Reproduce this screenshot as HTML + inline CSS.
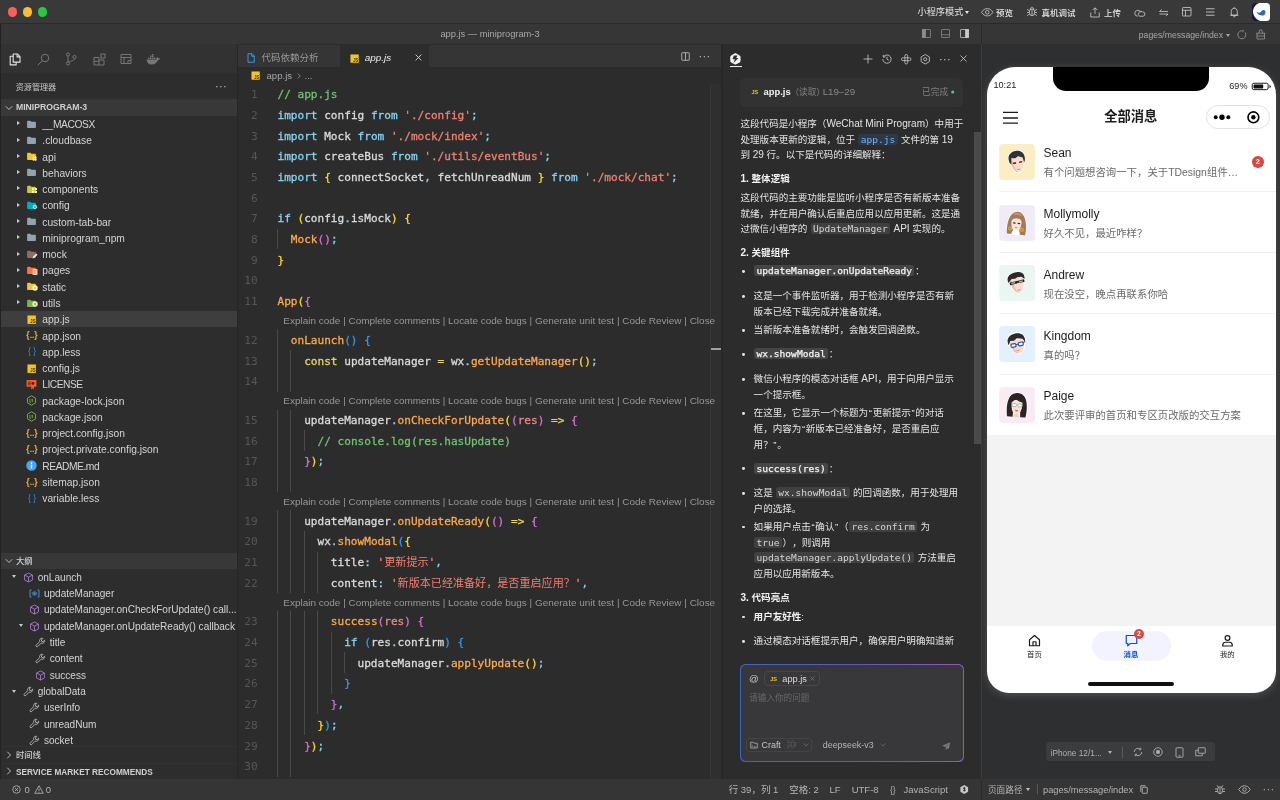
<!DOCTYPE html>
<html lang="zh-CN">
<head>
<meta charset="utf-8">
<title>app.js — miniprogram-3</title>
<style>
*{box-sizing:border-box;margin:0;padding:0}
html,body{width:1280px;height:800px;overflow:hidden;background:#2d2d2d}
#root{position:absolute;left:0;top:0;width:1280px;height:800px;will-change:transform}
body{text-spacing-trim:space-all;font-family:"Liberation Sans","Noto Sans CJK SC",sans-serif;font-size:9.6px;color:#ccc;position:relative;-webkit-font-smoothing:antialiased}
.abs{position:absolute}
svg{display:block;overflow:visible}
/* ---------- top bars ---------- */
#titlebar{left:0;top:0;width:1280px;height:24px;background:#393939;border-bottom:1px solid #2a2a2a}
.tl{position:absolute;top:6.9px;width:9.7px;height:9.7px;border-radius:50%}
#bar2{left:0;top:24px;width:1280px;height:21px;background:#363636}
#bar2r{left:981px;top:24px;width:299px;height:20.5px;background:#363636;border-left:1px solid #2a2a2a}
.tbt{position:absolute;top:0;height:24px;line-height:24px;font-size:9.2px;color:#e4e4e4;white-space:nowrap}
.tbt b{font-weight:500;font-size:8.5px;position:relative;top:.5px}
/* ---------- sidebar ---------- */
#side{left:0;top:44px;width:237.5px;height:736px;background:#2d2d2d}
#act{left:0;top:44px;width:237px;height:29px;background:#323232}
#edge{left:0;top:23px;width:1px;height:777px;background:#222}
.sh{position:absolute;left:1px;width:235.7px;height:16.3px;line-height:17.6px;background:#383838;font-weight:bold;font-size:9.3px;color:#d0d0d0;padding-left:15px;white-space:nowrap}
.row{position:absolute;left:1px;width:235.7px;height:16.3px;line-height:18.5px;font-size:10.25px;color:#d4d4d4;white-space:nowrap}
.row .t{position:absolute;left:41.3px;top:.4px}
.row .ic{position:absolute;left:25.4px;top:3px;width:11px;height:11px}
.row .ar{position:absolute;left:15.8px;top:5.8px;width:0;height:0;border-left:3.6px solid #c8c8c8;border-top:2.6px solid transparent;border-bottom:2.6px solid transparent}
.row.sel{background:#3e3e3e}
.orow{position:absolute;left:1px;width:235.7px;height:16.3px;line-height:17.4px;font-size:10.05px;color:#d4d4d4;white-space:nowrap;overflow:hidden}
.orow .t{position:absolute;top:0}
.orow .ic{position:absolute;top:2.9px;width:11px;height:11px;margin-left:-.5px}
.dn{position:absolute;top:6.6px;width:0;height:0;border-top:3.6px solid #c8c8c8;border-left:2.6px solid transparent;border-right:2.6px solid transparent}
/* ---------- editor ---------- */
#editor{left:237.5px;top:44px;width:483.5px;height:736px;background:#2c2c2c}
#tabs{left:237.5px;top:45px;width:483.5px;height:22px;background:#353535}
.tab{position:absolute;top:0;height:23px;line-height:23.5px;font-size:9.7px;white-space:nowrap}
#code{left:237.5px;top:82.9px;width:478px;font-family:"DejaVu Sans Mono","Noto Sans CJK SC",monospace;font-size:11.09px;color:#dcdcdc}
.ln{position:relative;height:20.7px;line-height:20.7px;white-space:pre}
.ln i{position:absolute;top:2.4px;left:0;width:20.1px;text-align:right;font-style:normal;color:#565656}
.ln s{position:absolute;top:2.4px;left:40px;text-decoration:none;-webkit-text-stroke:.28px}
.cl{position:relative;height:18px;line-height:18.2px;white-space:pre;font-family:"Liberation Sans",sans-serif;font-size:9.98px;color:#979797}
.cl s{position:absolute;top:1.8px;left:45.8px;text-decoration:none}
.ln u{text-decoration:none}
.ln u.z{-webkit-text-stroke:0;color:#f27f6e}
.g{position:absolute;top:1px;width:1px;height:100%;background:#494949}
.k{color:#86d4f3}.c{color:#6fc46f}.st{color:#f2806f}.f{color:#ffa94d}.y{color:#ffd52b}.p{color:#d86fd6}.bl{color:#2f9bee}.pu{color:#86d4f3}.cn{color:#ecd75b}.pr{color:#e58a8a}.op{color:#ecd75b}
/* ---------- AI panel ---------- */
#ai{left:721px;top:44px;width:260px;height:736px;background:#2c2c2c;border-left:2px solid #272727}
#aitext{left:740.5px;top:116px;width:226px;font-size:9.55px;line-height:15.55px;color:#e6e6e6}
#aitext p{margin:0}
#aitext h4{font-size:9.55px;font-weight:bold;color:#f0f0f0;line-height:15.55px}
#aitext code{font-family:"DejaVu Sans Mono",monospace;font-size:9.2px;background:#3c3c3d;border-radius:2px;padding:0.5px 2.5px;color:#d8d8d8}
#aitext code.b{color:#6cb6ff;background:#2f3a4a}
#aitext ul{list-style:none}
#aitext li{position:relative;padding-left:13px}
#aitext li:before{content:"";position:absolute;left:2px;top:6.3px;width:3px;height:3px;border-radius:50%;background:#e6e6e6}
.ab{position:absolute;font-size:9.56px;line-height:15.6px;color:#e4e4e4;white-space:nowrap}
.ab b{font-weight:bold;color:#f2f2f2}
.ab .e{font-size:10.05px}
.ab .q{padding:0 .65px}
.ab code{font-family:"DejaVu Sans Mono",monospace;font-size:9.57px;background:#404041;border-radius:2.5px;padding:0 2.4px;color:#d6d6d6;margin:0 .6px}
.ab code.w{color:#f4f4f4;font-weight:normal;-webkit-text-stroke:.25px;background:#454546}
.ab code.b{color:#6cb6ff;background:#2e3948}
.ab .dot{position:absolute;left:-11.2px;top:6.5px;width:2.8px;height:2.8px;border-radius:50%;background:#e4e4e4}
/* ---------- simulator ---------- */
#sim{left:981px;top:44px;width:299px;height:736px;background:#2e2f30;border-left:1px solid #3a3b3c}
#phone{left:986.5px;top:66.5px;width:289.2px;height:626px;background:#fff;border-radius:28px 28px 22px 22px;overflow:hidden;color:#222;box-shadow:0 2px 9px rgba(255,255,255,.17)}
.msg{position:absolute;left:0;width:290px;height:60.7px}
.msg .av{position:absolute;left:12px;top:12.4px;width:36px;height:36px;border-radius:4px;overflow:hidden}
.msg .nm{position:absolute;left:57px;top:13.7px;font-size:12px;color:#1c1c1c;line-height:16px;white-space:nowrap}
.msg .tx{position:absolute;left:57px;top:34.7px;font-size:10.4px;color:#6a6a6a;line-height:14px;white-space:nowrap}
.msg .ln2{position:absolute;left:12px;right:0;bottom:0;height:1px;background:#f1f1f1}
/* ---------- status bar ---------- */
#status{left:0;top:779px;width:1280px;height:21px;background:#353535;font-size:9.5px;color:#b4b4b4;line-height:22px}
#status span{position:absolute;top:0;white-space:nowrap}
</style>
</head>
<body>
<div id="root">
<!-- ======= TITLE BAR ======= -->
<div id="titlebar" class="abs">
  <div class="tl" style="left:7.5px;background:#fe5f57"></div>
  <div class="tl" style="left:22.5px;background:#febc2e"></div>
  <div class="tl" style="left:37.5px;background:#28c840"></div>

  <!-- titlebar icons -->
  <svg class="abs" style="left:980.500px;top:8px" width="12.500" height="8.500" viewBox="0 0 25 17" fill="none" stroke="#d8d8d8" stroke-width="1.500"><path d="M1.200 8.500c3-5 7-7.300 11.300-7.300s8.300 2.300 11.300 7.300c-3 5-7 7.300-11.300 7.300s-8.300-2.300-11.300-7.300z"/><circle cx="12.500" cy="8.500" r="3.600"/></svg>
  <svg class="abs" style="left:1025.800px;top:6.200px" width="12" height="11" viewBox="0 0 24 22" fill="none" stroke="#d8d8d8" stroke-width="1.500"><ellipse cx="12" cy="12.500" rx="5.300" ry="7"/><path d="M8.500 6.500c.3-2.500 1.800-4 3.500-4s3.200 1.500 3.500 4M12 6v13.500M6.700 9.500l-4.500-2.500M17.300 9.500l4.500-2.500M6.700 13h-4.500M17.300 13h4.500M6.700 16.500l-4.500 2.500M17.300 16.500l4.500 2.500"/></svg>
  <svg class="abs" style="left:1089.500px;top:6.500px" width="10" height="11" viewBox="0 0 20 22" fill="none" stroke="#d8d8d8" stroke-width="1.500"><path d="M10 14v-12M5.500 6l4.500-4.500 4.500 4.500M1.500 11v9h17v-9"/></svg>
  <svg class="abs" style="left:1133.500px;top:7.500px" width="11.500" height="9" viewBox="0 0 23 18" fill="none" stroke="#d8d8d8" stroke-width="1.500"><path d="M7.500 16.500a6 6 0 1 1 5.800-8"/><path d="M11 16.500h6.500a4.300 4.300 0 0 0 0-8.600 5 5 0 0 0-6.500 8.600z" stroke-linejoin="round"/></svg>
  <svg class="abs" style="left:1158.500px;top:8.500px" width="9.500" height="7.500" viewBox="0 0 19 15" fill="none" stroke="#d8d8d8" stroke-width="1.500"><path d="M18 5h-17l4.500-4M1 10h17l-4.500 4"/></svg>
  <svg class="abs" style="left:1181.800px;top:7.300px" width="9.500" height="9.500" viewBox="0 0 19 19" fill="none" stroke="#d8d8d8" stroke-width="1.500"><rect x="1" y="1" width="17" height="17" rx="1.500"/><path d="M1 6.500h17M7 6.500v11.500"/></svg>
  <svg class="abs" style="left:1206px;top:8px" width="8.500" height="8" viewBox="0 0 17 16" fill="none" stroke="#d8d8d8" stroke-width="1.600"><path d="M0 1.500h17M0 8h17M0 14.500h17"/></svg>
  <svg class="abs" style="left:1229.800px;top:6.500px" width="8.500" height="11" viewBox="0 0 17 22" fill="none" stroke="#d8d8d8" stroke-width="1.600"><path d="M2.500 16.500v-7.500c0-4 2.500-6.500 6-6.500s6 2.500 6 6.500v7.500zM.5 16.500h16M6.500 19.500h4"/><path d="M8.500 2.500v-2"/></svg>
  <div class="abs" style="left:1252px;top:3px;width:18px;height:18px;border-radius:3.500px;background:#0f1a4d;overflow:hidden"><svg width="18" height="18" viewBox="0 0 18 18"><path d="M7 0h11v18h-10c-7-2-11-13-1-18z" fill="#fbfcff"/><path d="M4.500 8.500c1.500 1.800 3.500 1.500 4.500.3 1-1.200 2.200-2.300 3.800-1.300 1 .7.700 2.500.2 3.500-1 1.800-3.500 1.800-5.500 1-1.500-.6-2.700-2-3-3.500z" fill="#3a66b8"/></svg></div>
  <div class="tbt" style="left:917.5px">小程序模式</div>
  <div class="abs" style="left:964.5px;top:11px;width:0;height:0;border-top:3.5px solid #e4e4e4;border-left:2.6px solid transparent;border-right:2.6px solid transparent"></div>
  <div class="tbt" style="left:996px"><b>预览</b></div>
  <div class="tbt" style="left:1041.5px"><b>真机调试</b></div>
  <div class="tbt" style="left:1104px"><b>上传</b></div>
</div>
<div id="bar2" class="abs">
  <svg class="abs" style="left:921.500px;top:5.200px" width="9" height="9" viewBox="0 0 18 18" fill="none" stroke="#8c8c8c" stroke-width="1.500"><rect x="1" y="1" width="16" height="16" rx="1"/><rect x="1" y="1" width="6" height="16" fill="#8c8c8c"/></svg>
  <svg class="abs" style="left:940.500px;top:5.200px" width="9" height="9" viewBox="0 0 18 18" fill="none" stroke="#8c8c8c" stroke-width="1.500"><rect x="1" y="1" width="16" height="16" rx="1"/><path d="M1 11.500h16"/></svg>
  <svg class="abs" style="left:960px;top:5.200px" width="9" height="9" viewBox="0 0 18 18" fill="none" stroke="#c8c8c8" stroke-width="1.500"><rect x="1" y="1" width="16" height="16" rx="1"/><rect x="11" y="1" width="6" height="16" fill="#c8c8c8"/></svg>

  <div class="abs" style="left:0;width:980px;top:0;height:20px;line-height:20px;text-align:center;font-size:9.3px;color:#a8a8a8">app.js — miniprogram-3</div>
</div>
<div id="bar2r" class="abs">
  <div class="abs" style="right:57px;top:1px;height:20px;line-height:21px;font-size:8.66px;color:#a8a8a8;white-space:nowrap">pages/message/index</div>
  <div class="abs" style="left:244px;top:10px;width:0;height:0;border-top:3.2px solid #a8a8a8;border-left:2.5px solid transparent;border-right:2.5px solid transparent"></div>
  <svg class="abs" style="left:255px;top:6px" width="9.500" height="9.500" viewBox="0 0 19 19" fill="none" stroke="#9e9e9e" stroke-width="1.500"><path d="M12.500 2.100a8 8 0 1 0 3.600 2.700"/><path d="M12.300 0v3.300" stroke-width="1.300"/></svg>
  <svg class="abs" style="left:273.500px;top:5.200px" width="9.500" height="10.500" viewBox="0 0 19 21" fill="none" stroke="#9e9e9e" stroke-width="1.500"><path d="M.5 8.500h18M2 8.500v11.500h15v-11.500M5.500 8.500l2-6.500h4l2 6.500M2 14h15"/></svg>
</div>

<!-- ======= SIDEBAR ======= -->
<div id="side" class="abs"></div>
<div id="act" class="abs"></div>
<div id="editor" class="abs"></div>
<div id="tabs" class="abs"></div>
<div id="ai" class="abs"></div>
<div id="sim" class="abs"></div>
<div id="edge" class="abs"></div>
<div class="abs" style="left:236.700px;top:45px;width:1px;height:734px;background:#262626"></div>
<!--SB-START-->
<svg width="0" height="0" style="position:absolute">
  <defs>
    <symbol id="fold" viewBox="0 0 20 20"><path d="M2 4.5c0-.8.7-1.5 1.500-1.500h4.200l2 2h6.800c.8 0 1.500.7 1.500 1.500v8.500c0 .8-.7 1.500-1.500 1.500h-13c-.8 0-1.500-.7-1.500-1.500z"/></symbol>
    <symbol id="js" viewBox="0 0 20 20"><rect x="1" y="1" width="18" height="18" fill="#f5c31c"/><text x="7" y="17.500" font-family="Liberation Sans,sans-serif" font-size="10" font-weight="bold" fill="#2e2e2e" textLength="11" lengthAdjust="spacingAndGlyphs">JS</text></symbol>
    <symbol id="cube" viewBox="0 0 20 20"><path d="M10 1.800l7.200 3.800v8.800l-7.200 3.800-7.200-3.800v-8.800zM2.800 5.600l7.200 3.800 7.200-3.800M10 9.400v8.800" fill="none" stroke="#b180d7" stroke-width="1.500" stroke-linejoin="round"/></symbol>
    <symbol id="wrench" viewBox="0 0 20 20"><path d="M12.800 2.200a4.600 4.600 0 0 0-4.300 6.200l-6.100 6.100a1.900 1.900 0 0 0 2.700 2.700l6.100-6.100a4.600 4.600 0 0 0 6.300-5.300l-2.700 2.700-2.600-.6-.6-2.600 2.700-2.700a4.600 4.600 0 0 0-1.500-.4z" fill="none" stroke="#cfcfcf" stroke-width="1.400" stroke-linejoin="round"/></symbol>
    <symbol id="json" viewBox="0 0 24 20"><text x="12" y="15.500" font-family="Liberation Sans,sans-serif" font-size="17" font-weight="bold" fill="#f2b632" text-anchor="middle">{..}</text></symbol>
    <symbol id="less" viewBox="0 0 24 20"><text x="12" y="15.500" font-family="Liberation Sans,sans-serif" font-size="17" fill="#2196e8" text-anchor="middle">{ }</text></symbol>
    <symbol id="node" viewBox="0 0 20 20"><path d="M10 1.500l7.400 4.250v8.500l-7.400 4.250-7.400-4.250v-8.500z" fill="none" stroke="#7cb342" stroke-width="1.700"/><path d="M7 7v6l2 1M12.800 8.200c-2.500-1.200-3.600 1-1.200 1.700 2.400.7 1.300 3-1.400 1.800" fill="none" stroke="#7cb342" stroke-width="1.400"/></symbol>
  </defs>
</svg>
<!-- activity icons -->
<svg class="abs" style="left:8.600px;top:52.600px" width="12" height="12.800" viewBox="0 0 26 28" fill="none" stroke="#e6e6e6" stroke-width="2.300" stroke-linejoin="round"><path d="M9 2h9l6 6v12h-15z"/><path d="M17.500 2v6.500h6.500"/><path d="M9 7h-6.500v19h13v-6"/></svg>
<svg class="abs" style="left:36.500px;top:52.500px" width="13" height="13" viewBox="0 0 26 26" fill="none" stroke="#767676" stroke-width="2"><circle cx="16" cy="10" r="7.500"/><path d="M10.500 15.500l-9 9"/></svg>
<svg class="abs" style="left:65px;top:52px" width="12" height="14" viewBox="0 0 24 28" fill="none" stroke="#767676" stroke-width="2"><circle cx="6" cy="5" r="3.200"/><circle cx="6" cy="23" r="3.200"/><circle cx="19" cy="10" r="3.200"/><path d="M6 8.200v11.600M19 13.200c0 5-7 4-12 7"/></svg>
<svg class="abs" style="left:92.500px;top:52.500px" width="13" height="13" viewBox="0 0 26 26" fill="none" stroke="#767676" stroke-width="2"><path d="M2 9h10v15h-10zM12 14h10v10h-10M2 16.500h10"/><rect x="16" y="2" width="8" height="8"/></svg>
<svg class="abs" style="left:120px;top:53px" width="12" height="12" viewBox="0 0 24 24" fill="none" stroke="#767676" stroke-width="2"><path d="M2 3h20v18h-20zM2 9h20M8 9v12h8v-6h6"/></svg>
<svg class="abs" style="left:146px;top:53.500px" width="14" height="11" viewBox="0 0 28 22"><path d="M1 11h19c1-3 3-5 4-5 1 1 1 2 1 3 1-.5 2-.5 3 0-.5 2-2 3-4 3-2 5-6 9-13 9-6 0-9-4-10-10z" fill="#767676"/><path d="M4 7h3v3h-3zM8 7h3v3h-3zM12 7h3v3h-3zM8 3h3v3h-3zM12 3h3v3h-3zM12 0h3v2.500h-3zM16 7h3v3h-3z" fill="#767676"/></svg>

<div class="abs" style="left:15.700px;top:80.500px;height:14px;line-height:14px;font-size:8.100px;color:#c8c8c8;white-space:nowrap">资源管理器</div>
<div class="abs" style="left:215px;top:79px;height:14px;line-height:14px;font-size:11px;color:#c0c0c0;letter-spacing:.3px">···</div>

<div class="sh" style="top:99.300px;font-size:8.660px">MINIPROGRAM-3</div>
<svg class="abs" style="left:4.500px;top:104.500px" width="8" height="6" viewBox="0 0 16 12" fill="none" stroke="#c8c8c8" stroke-width="1.800"><path d="M1.500 2.500l6.500 6.500 6.500-6.500"/></svg>

<div class="row" style="top:115.600px"><span class="ar"></span><svg class="ic" fill="#90a4ae"><use href="#fold"/></svg><span class="t" style="letter-spacing:-.4px">__MACOSX</span></div>
<div class="row" style="top:131.870px"><span class="ar"></span><svg class="ic" fill="#90a4ae"><use href="#fold"/></svg><span class="t">.cloudbase</span></div>
<div class="row" style="top:148.140px"><span class="ar"></span><svg class="ic" fill="#fbc02d"><use href="#fold"/></svg><svg class="abs" style="left:31.0px;top:7.4px" width="5" height="5" viewBox="0 0 10 10" stroke="#fff8e1" stroke-width="1.600"><path d="M3.500 0v10M7.500 0v10M0 3.500h10M0 7.500h10"/></svg><span class="t">api</span></div>
<div class="row" style="top:164.410px"><span class="ar"></span><svg class="ic" fill="#90a4ae"><use href="#fold"/></svg><span class="t">behaviors</span></div>
<div class="row" style="top:180.680px"><span class="ar"></span><svg class="ic" fill="#c0ca33"><use href="#fold"/></svg><svg class="abs" style="left:31.0px;top:7.4px" width="5" height="5" viewBox="0 0 10 10" fill="#f0f4c3"><rect x="0" y="0" width="4.200" height="4.200"/><rect x="5.800" y="0" width="4.200" height="4.200"/><rect x="0" y="5.800" width="4.200" height="4.200"/><rect x="5.800" y="5.800" width="4.200" height="4.200"/></svg><span class="t">components</span></div>
<div class="row" style="top:196.950px"><span class="ar"></span><svg class="ic" fill="#00acc1"><use href="#fold"/></svg><svg class="abs" style="left:30.5px;top:6.9px" width="6" height="6" viewBox="0 0 12 12"><circle cx="6" cy="6" r="3.300" fill="none" stroke="#b2ebf2" stroke-width="2.600" stroke-dasharray="1.700 1"/><circle cx="6" cy="6" r="3" fill="none" stroke="#b2ebf2" stroke-width="1.600"/></svg><span class="t">config</span></div>
<div class="row" style="top:213.220px"><span class="ar"></span><svg class="ic" fill="#90a4ae"><use href="#fold"/></svg><span class="t">custom-tab-bar</span></div>
<div class="row" style="top:229.490px"><span class="ar"></span><svg class="ic" fill="#90a4ae"><use href="#fold"/></svg><span class="t">miniprogram_npm</span></div>
<div class="row" style="top:245.760px"><span class="ar"></span><svg class="ic" fill="#8d6e63"><use href="#fold"/></svg><svg class="abs" style="left:30.5px;top:6.9px" width="6" height="6" viewBox="0 0 12 12"><path d="M1 11l1.500-4 6-6 2.500 2.500-6 6z" fill="#efebe9"/></svg><span class="t">mock</span></div>
<div class="row" style="top:262.030px"><span class="ar"></span><svg class="ic" fill="#ff7043"><use href="#fold"/></svg><svg class="abs" style="left:30.5px;top:6.9px" width="6" height="6" viewBox="0 0 12 12"><rect x="1" y="0" width="10" height="12" rx="1.500" fill="#ffccbc"/><path d="M3 3.500h6M3 6h6M3 8.500h4" stroke="#ff7043" stroke-width="1.200"/></svg><span class="t">pages</span></div>
<div class="row" style="top:278.300px"><span class="ar"></span><svg class="ic" fill="#fbc02d"><use href="#fold"/></svg><svg class="abs" style="left:30.5px;top:6.9px" width="6" height="6" viewBox="0 0 12 12"><circle cx="6" cy="6" r="5.500" fill="#fff3c4"/><circle cx="6" cy="6" r="2" fill="#fbc02d"/></svg><span class="t">static</span></div>
<div class="row" style="top:294.570px"><span class="ar"></span><svg class="ic" fill="#7cb342"><use href="#fold"/></svg><svg class="abs" style="left:30.5px;top:6.9px" width="6" height="6" viewBox="0 0 12 12"><circle cx="6" cy="6" r="5.500" fill="#dcedc8"/><circle cx="6" cy="6" r="2" fill="#7cb342"/></svg><span class="t">utils</span></div>
<div class="row sel" style="top:310.840px"><svg class="ic" style="left:26.2px;top:4.4px;width:9.4px;height:9.4px"><use href="#js"/></svg><span class="t">app.js</span></div>
<div class="row" style="top:327.110px"><svg class="ic" style="left:25px;width:12px"><use href="#json"/></svg><span class="t">app.json</span></div>
<div class="row" style="top:343.380px"><svg class="ic" style="left:25px;width:12px"><use href="#less"/></svg><span class="t">app.less</span></div>
<div class="row" style="top:359.650px"><svg class="ic" style="left:26.2px;top:4.4px;width:9.4px;height:9.4px"><use href="#js"/></svg><span class="t">config.js</span></div>
<div class="row" style="top:375.920px"><svg class="ic" viewBox="0 0 20 20"><path d="M1 2h18v12h-4.500v5l-2.500-2-2.500 2v-5h-8.500z" fill="#ff5722"/><path d="M3.500 5.500h5M3.500 8h5M3.500 10.500h5" stroke="#2e2e2e" stroke-width="1.300"/><circle cx="12.500" cy="8" r="2.600" fill="#2e2e2e"/></svg><span class="t" style="letter-spacing:-.5px">LICENSE</span></div>
<div class="row" style="top:392.190px"><svg class="ic"><use href="#node"/></svg><span class="t">package-lock.json</span></div>
<div class="row" style="top:408.460px"><svg class="ic"><use href="#node"/></svg><span class="t">package.json</span></div>
<div class="row" style="top:424.730px"><svg class="ic" style="left:25px;width:12px"><use href="#json"/></svg><span class="t">project.config.json</span></div>
<div class="row" style="top:441.000px"><svg class="ic" style="left:25px;width:12px"><use href="#json"/></svg><span class="t">project.private.config.json</span></div>
<div class="row" style="top:457.270px"><svg class="ic" viewBox="0 0 20 20"><circle cx="10" cy="10" r="9.500" fill="#42a5f5"/><circle cx="10" cy="5.600" r="1.500" fill="#fff"/><rect x="8.700" y="8.400" width="2.600" height="7" fill="#fff"/></svg><span class="t" style="letter-spacing:-.45px">README.md</span></div>
<div class="row" style="top:473.540px"><svg class="ic" style="left:25px;width:12px"><use href="#json"/></svg><span class="t">sitemap.json</span></div>
<div class="row" style="top:489.810px"><svg class="ic" style="left:25px;width:12px"><use href="#less"/></svg><span class="t">variable.less</span></div>

<!-- outline -->
<div class="sh" style="top:552.500px;font-size:8.300px;font-weight:500">大纲</div>
<svg class="abs" style="left:4.500px;top:557.700px" width="8" height="6" viewBox="0 0 16 12" fill="none" stroke="#c8c8c8" stroke-width="1.800"><path d="M1.500 2.500l6.500 6.500 6.500-6.500"/></svg>
<div class="orow" style="top:568.850px"><span class="dn" style="left:11px"></span><svg class="ic" style="left:22.600px"><use href="#cube"/></svg><span class="t" style="left:36.700px">onLaunch</span></div>
<div class="orow" style="top:585.150px"><svg class="ic" style="left:28px;width:11px" viewBox="0 0 22 20" fill="none" stroke="#4fa3e6" stroke-width="1.600"><path d="M5 3h-3v14h3M17 3h3v14h-3"/><ellipse cx="11" cy="10" rx="4.500" ry="3.200"/><circle cx="11" cy="10" r="1.200" fill="#4fa3e6"/></svg><span class="t" style="left:42.900px">updateManager</span></div>
<div class="orow" style="top:601.450px"><svg class="ic" style="left:28.400px"><use href="#cube"/></svg><span class="t" style="left:42.900px">updateManager.onCheckForUpdate() call...</span></div>
<div class="orow" style="top:617.750px"><span class="dn" style="left:17.500px"></span><svg class="ic" style="left:28.400px"><use href="#cube"/></svg><span class="t" style="left:42.900px">updateManager.onUpdateReady() callback</span></div>
<div class="orow" style="top:634.050px"><svg class="ic" style="left:34.300px"><use href="#wrench"/></svg><span class="t" style="left:48.700px">title</span></div>
<div class="orow" style="top:650.350px"><svg class="ic" style="left:34.300px"><use href="#wrench"/></svg><span class="t" style="left:48.700px">content</span></div>
<div class="orow" style="top:666.650px"><svg class="ic" style="left:34.300px"><use href="#cube"/></svg><span class="t" style="left:48.700px">success</span></div>
<div class="orow" style="top:682.950px"><span class="dn" style="left:11px"></span><svg class="ic" style="left:22.600px"><use href="#wrench"/></svg><span class="t" style="left:36.700px">globalData</span></div>
<div class="orow" style="top:699.250px"><svg class="ic" style="left:28.400px"><use href="#wrench"/></svg><span class="t" style="left:42.900px">userInfo</span></div>
<div class="orow" style="top:715.550px"><svg class="ic" style="left:28.400px"><use href="#wrench"/></svg><span class="t" style="left:42.900px">unreadNum</span></div>
<div class="orow" style="top:731.850px"><svg class="ic" style="left:28.400px"><use href="#wrench"/></svg><span class="t" style="left:42.900px">socket</span></div>

<div class="sh" style="top:746.400px;background:#2d2d2d;border-top:1px solid #313131;font-size:8.300px;font-weight:500">时间线</div>
<svg class="abs" style="left:5.500px;top:750.500px" width="6" height="8" viewBox="0 0 12 16" fill="none" stroke="#c8c8c8" stroke-width="1.800"><path d="M2.500 1.500l6.500 6.500-6.500 6.500"/></svg>
<div class="sh" style="top:762.700px;background:#2d2d2d;border-top:1px solid #313131;font-size:8.270px">SERVICE MARKET RECOMMENDS</div>
<svg class="abs" style="left:5.500px;top:767px" width="6" height="8" viewBox="0 0 12 16" fill="none" stroke="#c8c8c8" stroke-width="1.800"><path d="M2.500 1.500l6.500 6.500-6.500 6.500"/></svg>
<!--SB-END-->
<!--ED-START-->
<!-- tabs -->
<svg class="abs" style="left:246.500px;top:53.200px" width="8" height="10" viewBox="0 0 16 20" fill="none" stroke="#3a96e8" stroke-width="2"><path d="M2 1.500h8l4.500 4.500v12.500h-12.500zM9.500 1.500v5h5"/></svg>
<div class="tab abs" style="left:261.600px;top:46.400px;font-size:9.500px;color:#9a9a9a">代码依赖分析</div>
<div class="abs" style="left:339.800px;top:45px;width:89.700px;height:22px;background:#2c2c2c"></div>
<svg class="abs" style="left:349.600px;top:53.800px" width="9.200" height="9.200"><use href="#js"/></svg>
<div class="tab abs" style="left:364.800px;top:46.400px;font-style:italic;font-size:9.900px;color:#f0f0f0">app.js</div>
<svg class="abs" style="left:415px;top:53.500px" width="7" height="7" viewBox="0 0 12 12" stroke="#e0e0e0" stroke-width="1.500"><path d="M1 1l10 10M11 1l-10 10"/></svg>
<svg class="abs" style="left:680.500px;top:51.500px" width="9" height="9" viewBox="0 0 18 18" fill="none" stroke="#c0c0c0" stroke-width="1.700"><rect x="1.500" y="1.500" width="15" height="15" rx="1"/><path d="M9 1.500v15"/></svg>
<div class="abs" style="left:698.500px;top:49px;height:14px;line-height:14px;font-size:11px;color:#c0c0c0;letter-spacing:.3px">···</div>
<!-- breadcrumb -->
<svg class="abs" style="left:250.800px;top:70.800px" width="9.200" height="9.200"><use href="#js"/></svg>
<div class="abs" style="left:266.500px;top:68px;height:15px;line-height:15px;font-size:9.600px;color:#a6a6a6;white-space:nowrap">app.js</div>
<svg class="abs" style="left:296.500px;top:72.500px" width="4" height="6" viewBox="0 0 8 12" fill="none" stroke="#a0a0a0" stroke-width="1.500"><path d="M1.500 1l5 5-5 5"/></svg>
<div class="abs" style="left:304.500px;top:68px;height:15px;line-height:15px;font-size:9.600px;color:#a6a6a6">...</div>
<!-- minimap/scroll strip -->
<div class="abs" style="left:710.200px;top:84px;width:10.800px;height:695px;background:#2f2f2f;border-left:1px solid #363636"></div>
<div class="abs" style="left:710.600px;top:348px;width:10.500px;height:1.500px;background:#a0a0a0"></div>
<div id="code" class="abs">
<div class="ln"><i>1</i><s><u class="c">// app.js</u></s></div>
<div class="ln"><i>2</i><s><u class="k">import</u> config <u class="k">from</u> <u class="st">'./config'</u><u class="pu">;</u></s></div>
<div class="ln"><i>3</i><s><u class="k">import</u> Mock <u class="k">from</u> <u class="st">'./mock/index'</u><u class="pu">;</u></s></div>
<div class="ln"><i>4</i><s><u class="k">import</u> createBus <u class="k">from</u> <u class="st">'./utils/eventBus'</u><u class="pu">;</u></s></div>
<div class="ln"><i>5</i><s><u class="k">import</u> <u class="y">{</u> connectSocket<u class="pu">,</u> fetchUnreadNum <u class="y">}</u> <u class="k">from</u> <u class="st">'./mock/chat'</u><u class="pu">;</u></s></div>
<div class="ln"><i>6</i><s></s></div>
<div class="ln"><i>7</i><s><u class="k">if</u> <u class="y">(</u>config<u class="pu">.</u>isMock<u class="y">)</u> <u class="y">{</u></s></div>
<div class="ln"><b class="g" style="left:39.5px"></b><i>8</i><s>  <u class="f">Mock</u><u class="p">()</u><u class="pu">;</u></s></div>
<div class="ln"><i>9</i><s><u class="y">}</u></s></div>
<div class="ln"><i>10</i><s></s></div>
<div class="ln"><i>11</i><s><u class="f">App</u><u class="y">(</u><u class="p">{</u></s></div>
<div class="cl"><s>Explain code | Complete comments | Locate code bugs | Generate unit test | Code Review | Close</s></div>
<div class="ln"><b class="g" style="left:39.5px"></b><i>12</i><s>  <u class="f">onLaunch</u><u class="bl">()</u> <u class="bl">{</u></s></div>
<div class="ln"><b class="g" style="left:39.5px"></b><b class="g" style="left:52.9px"></b><i>13</i><s>    <u class="cn">const</u> updateManager <u class="op">=</u> wx<u class="pu">.</u><u class="f">getUpdateManager</u><u class="y">()</u><u class="pu">;</u></s></div>
<div class="ln"><b class="g" style="left:39.5px"></b><b class="g" style="left:52.9px"></b><i>14</i><s></s></div>
<div class="cl"><s>Explain code | Complete comments | Locate code bugs | Generate unit test | Code Review | Close</s></div>
<div class="ln"><b class="g" style="left:39.5px"></b><b class="g" style="left:52.9px"></b><i>15</i><s>    updateManager<u class="pu">.</u><u class="f">onCheckForUpdate</u><u class="y">(</u><u class="p">(</u><u class="pr">res</u><u class="p">)</u> <u class="op">=&gt;</u> <u class="p">{</u></s></div>
<div class="ln"><b class="g" style="left:39.5px"></b><b class="g" style="left:52.9px"></b><b class="g" style="left:66.3px"></b><i>16</i><s>      <u class="c">// console.log(res.hasUpdate)</u></s></div>
<div class="ln"><b class="g" style="left:39.5px"></b><b class="g" style="left:52.9px"></b><i>17</i><s>    <u class="p">}</u><u class="y">)</u><u class="pu">;</u></s></div>
<div class="ln"><b class="g" style="left:39.5px"></b><b class="g" style="left:52.9px"></b><i>18</i><s></s></div>
<div class="cl"><s>Explain code | Complete comments | Locate code bugs | Generate unit test | Code Review | Close</s></div>
<div class="ln"><b class="g" style="left:39.5px"></b><b class="g" style="left:52.9px"></b><i>19</i><s>    updateManager<u class="pu">.</u><u class="f">onUpdateReady</u><u class="y">(</u><u class="p">()</u> <u class="op">=&gt;</u> <u class="p">{</u></s></div>
<div class="ln"><b class="g" style="left:39.5px"></b><b class="g" style="left:52.9px"></b><b class="g" style="left:66.3px"></b><i>20</i><s>      wx<u class="pu">.</u><u class="f">showModal</u><u class="bl">(</u><u class="y">{</u></s></div>
<div class="ln"><b class="g" style="left:39.5px"></b><b class="g" style="left:52.9px"></b><b class="g" style="left:66.3px"></b><b class="g" style="left:79.7px"></b><i>21</i><s>        title<u class="pu">:</u> <u class="st">'<u class="z">更新提示</u>'</u><u class="pu">,</u></s></div>
<div class="ln"><b class="g" style="left:39.5px"></b><b class="g" style="left:52.9px"></b><b class="g" style="left:66.3px"></b><b class="g" style="left:79.7px"></b><i>22</i><s>        content<u class="pu">:</u> <u class="st">'<u class="z">新版本已经准备好，是否重启应用？</u>'</u><u class="pu">,</u></s></div>
<div class="cl"><s>Explain code | Complete comments | Locate code bugs | Generate unit test | Code Review | Close</s></div>
<div class="ln"><b class="g" style="left:39.5px"></b><b class="g" style="left:52.9px"></b><b class="g" style="left:66.3px"></b><b class="g" style="left:79.7px"></b><i>23</i><s>        <u class="f">success</u><u class="p">(</u><u class="pr">res</u><u class="p">)</u> <u class="p">{</u></s></div>
<div class="ln"><b class="g" style="left:39.5px"></b><b class="g" style="left:52.9px"></b><b class="g" style="left:66.3px"></b><b class="g" style="left:79.7px"></b><b class="g" style="left:93.1px"></b><i>24</i><s>          <u class="k">if</u> <u class="bl">(</u>res<u class="pu">.</u>confirm<u class="bl">)</u> <u class="bl">{</u></s></div>
<div class="ln"><b class="g" style="left:39.5px"></b><b class="g" style="left:52.9px"></b><b class="g" style="left:66.3px"></b><b class="g" style="left:79.7px"></b><b class="g" style="left:93.1px"></b><b class="g" style="left:106.5px"></b><i>25</i><s>            updateManager<u class="pu">.</u><u class="f">applyUpdate</u><u class="y">()</u><u class="pu">;</u></s></div>
<div class="ln"><b class="g" style="left:39.5px"></b><b class="g" style="left:52.9px"></b><b class="g" style="left:66.3px"></b><b class="g" style="left:79.7px"></b><b class="g" style="left:93.1px"></b><i>26</i><s>          <u class="bl">}</u></s></div>
<div class="ln"><b class="g" style="left:39.5px"></b><b class="g" style="left:52.9px"></b><b class="g" style="left:66.3px"></b><b class="g" style="left:79.7px"></b><i>27</i><s>        <u class="p">}</u><u class="pu">,</u></s></div>
<div class="ln"><b class="g" style="left:39.5px"></b><b class="g" style="left:52.9px"></b><b class="g" style="left:66.3px"></b><i>28</i><s>      <u class="y">}</u><u class="bl">)</u><u class="pu">;</u></s></div>
<div class="ln"><b class="g" style="left:39.5px"></b><b class="g" style="left:52.9px"></b><i>29</i><s>    <u class="p">}</u><u class="y">)</u><u class="pu">;</u></s></div>
<div class="ln"><b class="g" style="left:39.5px"></b><b class="g" style="left:52.9px"></b><i>30</i><s></s></div>
</div>
<!--ED-END-->
<!--AI-START-->
<!-- AI header -->
<svg class="abs" style="left:730.300px;top:52.600px" width="10.800" height="11.800" viewBox="0 0 22 24"><path d="M11 .5c.7 0 1.300.2 1.900.5l6.700 3.900c1.200.7 1.900 1.900 1.900 3.300v7.600c0 1.400-.7 2.600-1.900 3.300l-6.700 3.900c-1.200.7-2.600.7-3.800 0l-6.700-3.900c-1.200-.7-1.900-1.900-1.900-3.300v-7.600c0-1.400.7-2.600 1.900-3.300l6.700-3.900c.6-.3 1.200-.5 1.900-.5z" fill="#f2f2f2"/><path d="M7.800 5h7.700l-3 5h4.700l-10 10.200 2.700-7.400h-4.700z" fill="#2c2c2c"/></svg>
<div class="abs" style="left:729.700px;top:65.800px;width:12px;height:1.300px;background:#f0f0f0"></div>
<svg class="abs" style="left:863px;top:53.700px" width="10" height="10" viewBox="0 0 20 20" stroke="#d0d0d0" stroke-width="1.600" fill="none"><path d="M10 1v18M1 10h18"/></svg>
<svg class="abs" style="left:882px;top:53.700px" width="10" height="10" viewBox="0 0 20 20" stroke="#d0d0d0" stroke-width="1.600" fill="none"><path d="M3.200 5.500a8.300 8.300 0 1 1-1.500 4.500"/><path d="M2.500 1.500v4.500h4.500M10 5.500v5l3.500 2"/></svg>
<svg class="abs" style="left:901px;top:53.500px" width="10.500" height="10.500" viewBox="0 0 21 21" stroke="#d0d0d0" stroke-width="1.500" fill="none"><rect x="7.700" y="1" width="5.600" height="19" rx="2.800"/><rect x="1" y="7.700" width="19" height="5.600" rx="2.800"/></svg>
<svg class="abs" style="left:920px;top:53.500px" width="10.500" height="10.500" viewBox="0 0 21 21" stroke="#d0d0d0" stroke-width="1.600" fill="none"><path d="M10.500 1l8.200 4.750v9.500l-8.200 4.750-8.200-4.750v-9.500z"/><circle cx="10.500" cy="10.500" r="3.200"/></svg>
<div class="abs" style="left:939px;top:51.500px;height:14px;line-height:14px;font-size:11px;color:#d0d0d0;letter-spacing:.3px">···</div>
<svg class="abs" style="left:960.300px;top:55.200px" width="7" height="7" viewBox="0 0 14 14" stroke="#d0d0d0" stroke-width="1.600"><path d="M1 1l12 12M13 1l-12 12"/></svg>
<!-- file card -->
<div class="abs" style="left:740px;top:77.500px;width:223px;height:29px;background:#323233;border-radius:5px"></div>
<div class="abs" style="left:751.500px;top:86px;height:12px;line-height:12px;font-size:5.600px;font-weight:bold;color:#e8c51f;letter-spacing:-.1px">JS</div>
<div class="abs" style="left:763.600px;top:84px;height:16px;line-height:16px;font-size:9.400px;font-weight:bold;color:#f2f2f2;white-space:nowrap">app.js</div>
<div class="abs" style="left:790.500px;top:84px;height:16px;line-height:16px;font-size:8.600px;color:#808080;white-space:nowrap">（读取）<span style="font-size:9.700px;margin-left:-2.200px;color:#888">L19–29</span></div>
<div class="abs" style="left:922px;top:84px;height:16px;line-height:16px;font-size:8.700px;color:#808080;white-space:nowrap">已完成</div>
<svg class="abs" style="left:950px;top:89px" width="6" height="6" viewBox="0 0 6 6"><circle cx="2.700" cy="3" r="1.500" fill="#3ad2ac"/></svg>
<!-- text -->
<div class="ab " style="top:116.05px;left:740.5px;width:226px">这段代码是小程序（<span class="e">WeChat Mini Program</span>）中用于<br>处理版本更新的逻辑，位于 <code class="b">app.js</code> 文件的第 <span class="e">19</span><br>到 <span class="e">29</span> 行。以下是代码的详细解释：</div>
<div class="ab " style="top:171.20px;left:740.5px;width:226px"><b><span class="e">1.</span> 整体逻辑</b></div>
<div class="ab " style="top:189.95px;left:740.5px;width:226px">这段代码的主要功能是监听小程序是否有新版本准备<br>就绪，并在用户确认后重启应用以应用更新。这是通<br>过微信小程序的 <code>UpdateManager</code> <span class="e">API</span> 实现的。</div>
<div class="ab " style="top:245.45px;left:740.5px;width:226px"><b><span class="e">2.</span> 关键组件</b></div>
<div class="ab" style="top:263.45px;left:753.6px;width:212px"><span class="dot"></span><code class="w">updateManager.onUpdateReady</code>：</div>
<div class="ab" style="top:288.45px;left:753.6px;width:212px"><span class="dot"></span>这是一个事件监听器，用于检测小程序是否有新<br>版本已经下载完成并准备就绪。</div>
<div class="ab" style="top:322.45px;left:753.6px;width:212px"><span class="dot"></span>当新版本准备就绪时，会触发回调函数。</div>
<div class="ab" style="top:346.45px;left:753.6px;width:212px"><span class="dot"></span><code class="w">wx.showModal</code>：</div>
<div class="ab" style="top:371.45px;left:753.6px;width:212px"><span class="dot"></span>微信小程序的模态对话框 <span class="e">API</span>，用于向用户显示<br>一个提示框。</div>
<div class="ab" style="top:405.45px;left:753.6px;width:212px"><span class="dot"></span>在这里，它显示一个标题为<span class="q">“</span>更新提示<span class="q">”</span>的对话<br>框，内容为<span class="q">“</span>新版本已经准备好，是否重启应<br>用？<span class="q">”</span>。</div>
<div class="ab" style="top:460.95px;left:753.6px;width:212px"><span class="dot"></span><code class="w">success(res)</code>：</div>
<div class="ab" style="top:485.45px;left:753.6px;width:212px"><span class="dot"></span>这是 <code>wx.showModal</code> 的回调函数，用于处理用<br>户的选择。</div>
<div class="ab" style="top:519.20px;left:753.6px;width:212px"><span class="dot"></span>如果用户点击<span class="q">“</span>确认<span class="q">”</span>（<code>res.confirm</code> 为<br><code>true</code>），则调用<br><code>updateManager.applyUpdate()</code> 方法重启<br>应用以应用新版本。</div>
<div class="ab " style="top:590.45px;left:740.5px;width:226px"><b><span class="e">3.</span> 代码亮点</b></div>
<div class="ab" style="top:609.20px;left:753.6px;width:212px"><span class="dot"></span><b>用户友好性</b>:</div>
<div class="ab" style="top:633.45px;left:753.6px;width:212px"><span class="dot"></span>通过模态对话框提示用户，确保用户明确知道新</div>
<!-- scrollbar -->
<div class="abs" style="left:974px;top:132px;width:6.500px;height:312px;background:#4b4b4b"></div>
<!-- input box -->
<div class="abs" style="left:739.500px;top:664.200px;width:224.300px;height:97.600px;border-radius:5.500px;background:linear-gradient(90deg,#3a66c6,#5f57c2 50%,#8f58c6)"></div>
<div class="abs" style="left:740.500px;top:665.200px;width:222.300px;height:95.600px;border-radius:4.700px;background:#38383a"></div>
<div class="abs" style="left:749px;top:671.500px;height:14px;line-height:14px;font-size:9.500px;color:#c8c8c8">@</div>
<div class="abs" style="left:764.200px;top:670.700px;width:56.300px;height:15.600px;border:1px solid #474748;border-radius:4px"></div>
<div class="abs" style="left:770.300px;top:672.600px;height:12px;line-height:12px;font-size:5.600px;font-weight:bold;color:#e8c51f;letter-spacing:-.1px">JS</div>
<div class="abs" style="left:782.300px;top:671.500px;height:14px;line-height:14px;font-size:9.200px;color:#dedede;white-space:nowrap">app.js</div>
<svg class="abs" style="left:810.200px;top:676.200px" width="5" height="5" viewBox="0 0 10 10" stroke="#777" stroke-width="1.400"><path d="M1 1l8 8M9 1l-8 8"/></svg>
<div class="abs" style="left:749.200px;top:691.200px;height:14px;line-height:14px;font-size:8.600px;color:#686868;white-space:nowrap">请输入你的问题</div>
<div class="abs" style="left:746.200px;top:738.200px;width:66.300px;height:13.800px;border:1px solid #434344;border-radius:3px"></div>
<svg class="abs" style="left:750px;top:741px" width="8" height="8" viewBox="0 0 16 16" stroke="#b8b8b8" stroke-width="1.500" fill="none"><path d="M1.500 2.500h5l1.500 2h6.500v9.500h-13z"/><path d="M5 8.500l-1.500 1.500 1.500 1.500M8 11.500h3"/></svg>
<div class="abs" style="left:761.600px;top:738px;height:14px;line-height:14px;font-size:8.900px;color:#c4c4c4;white-space:nowrap">Craft</div>
<div class="abs" style="left:786.500px;top:738px;height:14px;line-height:14px;font-size:7.600px;color:#6c6c6c;white-space:nowrap">⌘I</div>
<svg class="abs" style="left:802.500px;top:743.200px" width="6" height="4" viewBox="0 0 12 8" stroke="#6c6c6c" stroke-width="1.500" fill="none"><path d="M1 1l5 5 5-5"/></svg>
<div class="abs" style="left:822.800px;top:738px;height:14px;line-height:14px;font-size:8.900px;color:#b4b4b4;white-space:nowrap">deepseek-v3</div>
<svg class="abs" style="left:880.300px;top:742.800px" width="6" height="4" viewBox="0 0 12 8" stroke="#6c6c6c" stroke-width="1.500" fill="none"><path d="M1 1l5 5 5-5"/></svg>
<svg class="abs" style="left:941.500px;top:741.500px" width="8.500" height="8.500" viewBox="0 0 17 17" fill="#7e7e7e"><path d="M16.500 .5l-16 7 6 2.500zM16.500 .5l-9 10.500v5.500l2.800-3.800 3.200 1.300z"/></svg>
<!--AI-END-->
<!--SIM-START-->
<div id="phone" class="abs">
  <div class="abs" style="left:66.500px;top:-10px;width:156px;height:34.300px;background:#000;border-radius:0 0 13px 13px"></div>
  <div class="abs" style="left:7px;top:11.500px;height:14px;line-height:14px;font-size:9.100px;color:#1a1a1a">10:21</div>
  <div class="abs" style="left:242.800px;top:12.300px;height:14px;line-height:14px;font-size:9.100px;color:#1a1a1a">69%</div>
  <svg class="abs" style="left:264px;top:15px" width="21" height="9" viewBox="0 0 21 9"><rect x="1.250" y="1.250" width="15.900" height="6.400" rx="1.600" fill="none" stroke="#1a1a1a" stroke-width="1"/><rect x="2.600" y="2.600" width="9.600" height="3.800" rx=".6" fill="#111"/><path d="M18.500 3v3c.9-.2 1.300-.8 1.300-1.500s-.4-1.300-1.300-1.500z" fill="#1a1a1a"/></svg>
  <!-- nav -->
  <svg class="abs" style="left:16.500px;top:44px" width="15" height="13" viewBox="0 0 15 13" stroke="#1a1a1a" stroke-width="1.350"><path d="M0 1.350h15M0 6.950h15M0 12.050h15"/></svg>
  <div class="abs" style="left:0;width:290px;top:40.500px;height:20px;line-height:20px;text-align:center;font-size:13.3px;font-weight:bold;color:#1a1a1a;text-indent:-1.500px">全部消息</div>
  <div class="abs" style="left:219.700px;top:38.700px;width:64.100px;height:23.500px;border:1px solid #e2e2e2;border-radius:11.800px"></div>
  <svg class="abs" style="left:219.700px;top:38.700px" width="64.100" height="23.500" viewBox="0 0 64.100 23.500"><circle cx="9.700" cy="12.300" r="1.950"/><circle cx="16" cy="12.300" r="2.700"/><circle cx="22.300" cy="12.300" r="1.950"/><circle cx="47.400" cy="12.300" r="5.400" fill="none" stroke="#000" stroke-width="1.600"/><circle cx="47.400" cy="12.300" r="2.200"/></svg>
  <div class="msg" style="top:65.10px"><div class="av"><svg width="36.3" height="36" viewBox="0 0 36 36"><rect width="36" height="36" fill="#fbeec4"/><g transform="rotate(-10 18 18)"><path d="M9.600 16.500c-1.600-7.500 3-10.500 8.600-10.500 5.400 0 9.800 3 8.200 10.500-.3 1.800-1 3-1.600 3.600-.6 4.200-3.200 9.400-6.800 9.400s-6.200-5.200-6.800-9.400c-.7-.6-1.300-1.800-1.600-3.600z" fill="#fff"/><path d="M11.500 15c2-2.300 11-2.600 13.500 0 .3 5.500-2.400 13.500-6.800 13.500s-7-8-6.700-13.500z" fill="#f9dccc"/><path d="M11.500 15c-.2 5 2 12.500 5.600 13.400-2-2.500-3.400-8-3.200-12z" fill="#f2bda2"/><path d="M10.300 17.500c-1.600-7.200 2.600-10.600 8-10.600 5.200 0 9.300 3.400 7.700 10.600l-1.200 2.300-.6-5.400-4.400-1.800-3 1.400-3.800-.8-1.200 6.400z" fill="#333"/><path d="M13.600 18.500l3.200.3M19.800 18.800l3.200-.3" stroke="#2a2a2a" stroke-width="1.300"/><path d="M16.600 25.200c1 .5 2.200.5 3.200 0" stroke="#d98b7c" stroke-width="1" fill="none"/></g></svg></div><div class="nm">Sean</div><div class="tx">有个问题想咨询一下，关于TDesign组件…</div><div class="abs" style="left:265.500px;top:24.900px;width:11.500px;height:11.500px;border-radius:50%;background:#d54941;color:#fff;font-size:7.400px;font-weight:bold;line-height:11.700px;text-align:center">2</div><div class="ln2"></div></div>
<div class="msg" style="top:125.85px"><div class="av"><svg width="36.3" height="36" viewBox="0 0 36 36"><rect width="36" height="36" fill="#f1eaf7"/><g transform="rotate(6 18 18)"><path d="M8 30c-1.200-9 .2-24 9.600-24s11.300 14.500 10.300 24z" fill="#fff" opacity=".7"/><path d="M8.800 29.500c-1.200-9 .3-22.700 8.800-22.700s10.600 13.700 9.600 22.700h-5.600l-1-6h-5.200l-1 6z" fill="#a47a58"/><path d="M12 10c3-3 8-3.500 11 1-3.500-1.500-7.500-1.500-11-1z" fill="#c09a78"/><path d="M12.300 16c1.500-3.600 8.500-3.600 10 0 .3 4-.6 7.600-2.200 9.200-1.400 1.400-4.200 1.400-5.600 0-1.600-1.600-2.500-5.200-2.200-9.200z" fill="#fae2d6"/><path d="M13.300 29.500c.2-3 1.700-4.600 4.200-4.600s4 1.600 4.200 4.600z" fill="#fff"/><path d="M14 18.300h2.400M18.600 18.300h2.400" stroke="#3a2a22" stroke-width="1.200"/><path d="M16.300 22.600h2.400" stroke="#e2857b" stroke-width="1"/><circle cx="11.600" cy="24.200" r="1.500" fill="none" stroke="#e7b32a" stroke-width="1"/><circle cx="23.400" cy="24.200" r="1.500" fill="none" stroke="#e7b32a" stroke-width="1"/></g></svg></div><div class="nm">Mollymolly</div><div class="tx">好久不见，最近咋样？</div><div class="ln2"></div></div>
<div class="msg" style="top:186.60px"><div class="av"><svg width="36.3" height="36" viewBox="0 0 36 36"><rect width="36" height="36" fill="#eaf6f1"/><g transform="rotate(-14 18 18)"><path d="M9.400 15.500c-1.200-6 3-9 8.800-9 5.600 0 9.600 3 8.400 9-.2 2-.8 3.200-1.400 3.800-.6 4.200-3.300 9.500-7 9.500s-6.400-5.300-7-9.500c-.8-.6-1.500-1.800-1.800-3.800z" fill="#fff"/><path d="M11.300 14c2-1.500 11.600-1.500 13.600 0 .3 5.500-2.400 14-6.800 14s-7.100-8.500-6.800-14z" fill="#f9dccc"/><path d="M11.300 14c-.2 5 2.200 13 5.800 13.900-2-2.600-3.600-8.400-3.400-12.400z" fill="#f0b99e"/><path d="M9.600 16c-1.300-6.300 3.200-8.800 8.600-8.800 3 0 5.500.6 7 2.400 1.600 1.600 1.600 4 1 6.400l-2.600-3-4-.4-2.600.8-3.400-.6z" fill="#2d2929"/><path d="M10.600 16h15v2.500h-6l-.9-.9-.9.900h-7.200z" fill="#1b1b1b"/><path d="M12.200 16.600h4v1.300h-4zM20 16.600h4v1.300h-4z" fill="#9fc4cf"/><path d="M16.500 25c1 .4 2 .4 3 0" stroke="#d98b7c" stroke-width="1" fill="none"/></g></svg></div><div class="nm">Andrew</div><div class="tx">现在没空，晚点再联系你哈</div><div class="ln2"></div></div>
<div class="msg" style="top:247.35px"><div class="av"><svg width="36.3" height="36" viewBox="0 0 36 36"><rect width="36" height="36" fill="#e3f0fd"/><g transform="rotate(-12 18 18)"><path d="M8.800 17c-1.800-7.500 3.500-10.800 9.400-10.800 5.600 0 10.600 3.300 8.800 10.800-.3 1.600-.8 2.600-1.400 3.200-.6 3.800-3.400 8.300-7.400 8.300s-6.600-4.500-7.200-8.300c-.8-.6-1.700-1.600-2.200-3.200z" fill="#fff"/><path d="M11.300 15.500c2-2.500 11.600-2.500 13.600 0 .3 5-2.400 12.200-6.800 12.200s-7.100-7.200-6.800-12.200z" fill="#f9dccc"/><path d="M11.300 15.500c-.2 4.600 2.200 11.200 5.800 12.100-2-2.400-3.600-7.400-3.400-11z" fill="#f0b99e"/><path d="M9.500 17.500c-2-7 3.200-10.300 8.700-10.300 5.300 0 10 3.300 8 10.300l-2-3.600-5.400-1.500-3 1.700-3.800-.4z" fill="#2f2b2b"/><rect x="11.600" y="17" width="5" height="3.400" rx="1.200" fill="#fff" stroke="#2458c7" stroke-width="1.200"/><rect x="19" y="17" width="5" height="3.400" rx="1.200" fill="#fff" stroke="#2458c7" stroke-width="1.200"/><path d="M16.600 18.500h2.400M24 18l2.500-.8" stroke="#2458c7" stroke-width="1"/><path d="M15.800 24.300c1 .5 2.200.5 3.200 0" stroke="#d98b7c" stroke-width="1" fill="none"/></g></svg></div><div class="nm">Kingdom</div><div class="tx">真的吗？</div><div class="ln2"></div></div>
<div class="msg" style="top:308.10px"><div class="av"><svg width="36.3" height="36" viewBox="0 0 36 36"><rect width="36" height="36" fill="#f9ebf5"/><g transform="rotate(4 18 18)"><path d="M7.600 30.500c-1.600-11-1-25.500 10.200-25.500s12.200 14.500 10.600 25.500h-7l-.6-2.500h-5.600l-.6 2.500z" fill="#fff" opacity=".75"/><path d="M8.600 30c-1.600-10.500-1.200-24 9.200-24s11 13.500 9.400 24h-5.400l-.4-7.500h-6.800l-.4 7.500z" fill="#2a2425"/><path d="M12.400 15.500c1.500-3.200 9.300-3.200 10.800 0 .3 4.500-.6 8.500-2.400 10.400-1.500 1.500-4.500 1.500-6 0-1.800-1.900-2.700-5.900-2.400-10.400z" fill="#fae2d6"/><path d="M12.400 15.500c2-1 3-3 3.400-4.500 1 2 4.400 3.800 7.400 4.500-.8-4-3.400-5.500-5.400-5.500s-4.600 1.500-5.400 5.500z" fill="#2a2425"/><rect x="13" y="16.800" width="4.200" height="3" rx="1" fill="#fff" stroke="#9a9a9a" stroke-width=".7"/><rect x="18.600" y="16.800" width="4.200" height="3" rx="1" fill="#fff" stroke="#9a9a9a" stroke-width=".7"/><path d="M16.500 23.400c.8.500 2 .5 2.800 0" stroke="#d9534f" stroke-width="1.100" fill="none"/><path d="M14.600 30c.1-2 1.300-3.400 3.200-3.400s3.100 1.400 3.200 3.400z" fill="#f5cfc0"/></g></svg></div><div class="nm">Paige</div><div class="tx">此次要评审的首页和专区页改版的交互方案</div></div>
  <div class="abs" style="left:0;top:368.600px;width:290px;height:190.600px;background:#f3f3f3"></div>
  <!-- tabbar -->
  <div class="abs" style="left:105.400px;top:564.900px;width:78.900px;height:29.900px;border-radius:15px;background:#f2f3ff"></div>
  <svg class="abs" style="left:41.400px;top:567px" width="13" height="13" viewBox="0 0 26 26" fill="none" stroke="#1a1a1a" stroke-width="2.400" stroke-linejoin="round"><path d="M3 11.500l10-8.500 10 8.500v12h-20z"/><path d="M10 23.500v-8h6v8"/></svg>
  <div class="abs" style="left:28px;width:40px;top:583.300px;height:10px;line-height:10px;font-size:7.400px;color:#1a1a1a;text-align:center">首页</div>
  <svg class="abs" style="left:138px;top:567px" width="13" height="13" viewBox="0 0 26 26" fill="none" stroke="#0052d9" stroke-width="2.400" stroke-linejoin="round"><path d="M2.500 3h21v16h-13l-5 4.500v-4.500h-3z"/></svg>
  <div class="abs" style="left:147.400px;top:562.300px;width:10px;height:10px;border-radius:50%;background:#d54941;color:#fff;font-size:6.800px;font-weight:bold;line-height:10.200px;text-align:center">2</div>
  <div class="abs" style="left:124.500px;width:40px;top:583.300px;height:10px;line-height:10px;font-size:7.400px;color:#0052d9;text-align:center;font-weight:bold">消息</div>
  <svg class="abs" style="left:234.300px;top:567px" width="13" height="13" viewBox="0 0 26 26" fill="none" stroke="#1a1a1a" stroke-width="2.400"><circle cx="13" cy="8" r="4.800"/><path d="M3.500 24v-2c0-3.500 2.500-5.500 6-5.500h7c3.500 0 6 2 6 5.500v2z" stroke-linejoin="round"/></svg>
  <div class="abs" style="left:220.800px;width:40px;top:583.300px;height:10px;line-height:10px;font-size:7.400px;color:#1a1a1a;text-align:center">我的</div>
  <div class="abs" style="left:101px;top:615.800px;width:86px;height:4px;border-radius:2px;background:#111"></div>
</div>
<!-- device toolbar -->
<div class="abs" style="left:1045.800px;top:742.100px;width:169.200px;height:18.800px;background:#3b3c3d;border-radius:3px"></div>
<div class="abs" style="left:1050.600px;top:745.500px;height:14px;line-height:14px;font-size:8.300px;color:#b0b0b0;white-space:nowrap">iPhone 12/1...</div>
<div class="abs" style="left:1107.600px;top:750.500px;width:0;height:0;border-top:3.200px solid #b0b0b0;border-left:2.400px solid transparent;border-right:2.400px solid transparent"></div>
<div class="abs" style="left:1121.500px;top:746.500px;width:1px;height:11px;background:#5a5a5a"></div>
<svg class="abs" style="left:1132.500px;top:747px" width="10" height="10" viewBox="0 0 20 20" fill="none" stroke="#b4b4b4" stroke-width="1.700"><path d="M17.500 10a7.500 7.500 0 0 1-13 5M2.500 10a7.500 7.500 0 0 1 13-5"/><path d="M15.500 1.500v4h-4M4.500 18.500v-4h4"/></svg>
<svg class="abs" style="left:1153.400px;top:747px" width="10" height="10" viewBox="0 0 20 20" fill="none" stroke="#b4b4b4" stroke-width="1.700"><circle cx="10" cy="10" r="8.500"/><rect x="6.500" y="6.500" width="7" height="7" fill="#b4b4b4" stroke="none"/></svg>
<svg class="abs" style="left:1174.500px;top:746.500px" width="9" height="11" viewBox="0 0 18 22" fill="none" stroke="#b4b4b4" stroke-width="1.700"><rect x="2" y="1.500" width="14" height="19" rx="2"/><path d="M7 17.500h4"/></svg>
<svg class="abs" style="left:1194.500px;top:747px" width="11" height="10" viewBox="0 0 22 20" fill="none" stroke="#b4b4b4" stroke-width="1.700"><rect x="6.500" y="1.500" width="14" height="11" rx="1"/><path d="M6.500 6.500h-5v11h13v-5"/></svg>
<!--SIM-END-->
<!--ST-START-->
<div id="status" class="abs">
  <svg class="abs" style="left:12px;top:5.500px" width="9" height="9" viewBox="0 0 18 18" fill="none" stroke="#c4c4c4" stroke-width="1.500"><circle cx="9" cy="9" r="7.500"/><path d="M6 6l6 6M12 6l-6 6"/></svg>
  <span style="left:24.500px">0</span>
  <svg class="abs" style="left:33.500px;top:5.500px" width="10" height="9" viewBox="0 0 20 18" fill="none" stroke="#c4c4c4" stroke-width="1.500" stroke-linejoin="round"><path d="M10 1.500l8.500 15h-17z"/><path d="M10 7v5M10 13.500v1.500"/></svg>
  <span style="left:45.800px">0</span>
  <span style="left:728.700px">行 39，列 1</span>
  <span style="left:789.200px">空格: 2</span>
  <span style="left:829.500px">LF</span>
  <span style="left:851.700px">UTF-8</span>
  <span style="left:890px;font-size:8.500px">{}</span>
  <span style="left:903.500px">JavaScript</span>
  <svg class="abs" style="left:960.300px;top:5.500px" width="8.500" height="9" viewBox="0 0 21 22"><path d="M10.500 0l9.500 5.500v11l-9.500 5.500-9.500-5.500v-11z" fill="#c8c8c8"/><path d="M7 8l4-3.500 3 3-2.500 2.500 3 3-4 3.500-3-3 2.500-2.500z" fill="#353535"/></svg>
  <div class="abs" style="left:981px;top:0;width:1px;height:20px;background:#2a2a2a"></div>
  <span style="left:987.900px;font-size:8.700px">页面路径</span>
  <div class="abs" style="left:1026.400px;top:9px;width:0;height:0;border-top:3.200px solid #c4c4c4;border-left:2.400px solid transparent;border-right:2.400px solid transparent"></div>
  <div class="abs" style="left:1037px;top:5px;width:1px;height:10px;background:#5a5a5a"></div>
  <span style="left:1043px;font-size:9.270px">pages/message/index</span>
  <svg class="abs" style="left:1139.500px;top:5.500px" width="8" height="9" viewBox="0 0 16 18" fill="none" stroke="#c4c4c4" stroke-width="1.600"><rect x="4.500" y="4.500" width="10" height="12" rx="1"/><path d="M11 1.500h-9.500v12"/></svg>
  <svg class="abs" style="left:1214px;top:4.500px" width="12" height="11" viewBox="0 0 24 22" fill="none" stroke="#c4c4c4" stroke-width="1.600"><ellipse cx="12" cy="12.500" rx="5" ry="7"/><path d="M8.500 6l-2.500-3.500M15.500 6l2.500-3.500M7 10h-5M7 15h-5M17 10h5M17 15h5M12 7v12"/></svg>
  <svg class="abs" style="left:1238px;top:5.500px" width="13" height="9" viewBox="0 0 26 18" fill="none" stroke="#c4c4c4" stroke-width="1.600"><path d="M1.500 9c3-5 7-7.500 11.500-7.500s8.500 2.500 11.500 7.500c-3 5-7 7.500-11.500 7.500s-8.500-2.500-11.500-7.500z"/><circle cx="13" cy="9" r="3.500"/></svg>
  <span style="left:1262.500px;font-size:11px;letter-spacing:.3px;top:-1px">···</span>
</div>
<!--ST-END-->
</div>
</body>
</html>
